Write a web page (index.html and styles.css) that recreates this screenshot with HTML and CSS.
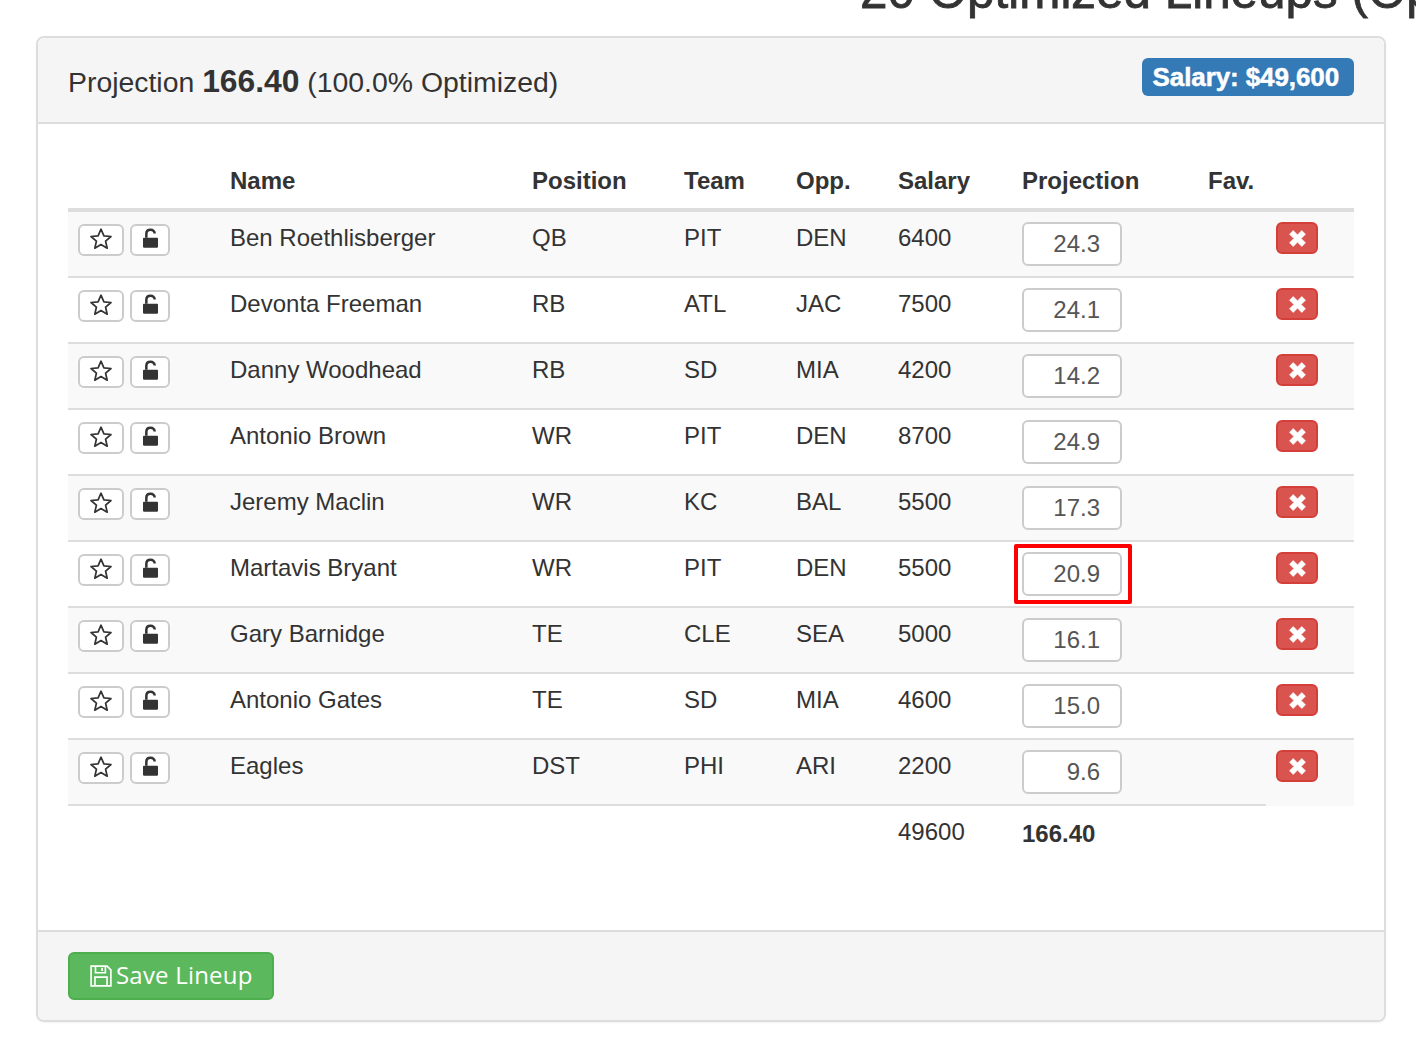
FILE: index.html
```html
<!DOCTYPE html>
<html lang="en">
<head>
<meta charset="utf-8">
<title>Optimized Lineups</title>
<link rel="stylesheet" href="styles.css">
</head>
<body>
<svg class="defs" width="0" height="0" aria-hidden="true">
  <symbol id="star" viewBox="0 0 24 24"><path d="M12 2.200l2.900 6.600 7.100.7-5.400 4.700 1.600 7-6.200-3.700-6.200 3.700 1.600-7L2 9.500l7.100-.7z" fill="none" stroke="currentColor" stroke-width="1.700" stroke-linejoin="round"/></symbol>
  <symbol id="lock" viewBox="0 0 18 24"><path d="M1 11h16a1 1 0 0 1 1 1v10a1 1 0 0 1-1 1H1a1 1 0 0 1-1-1V12a1 1 0 0 1 1-1z" fill="currentColor"/><path d="M4 11V6.500C4 3.500 6 1.500 9 1.500s5 2 5 4.500" fill="none" stroke="currentColor" stroke-width="3"/></symbol>
  <symbol id="cross" viewBox="0 0 16 16"><path d="M2.500 5L5 2.500 8 5.500l3-3L13.500 5l-3 3 3 3-2.500 2.500-3-3-3 3L2.500 11l3-3z" fill="currentColor" stroke="currentColor" stroke-width=".5" stroke-linejoin="round"/></symbol>
  <symbol id="disk" viewBox="0 0 20 20"><path d="M1 1h14.500L19 4.500V19H1z M5 1v6h9V1 M11 2.500v3 M4.500 19v-8h11v8" fill="none" stroke="currentColor" stroke-width="1.500"/></symbol>
</svg>
<h2 class="title">20 Optimized Lineups (Optimal)</h2>
<section class="panel">
  <header class="panel-head">
    <h3 class="panel-title">Projection <b>166.40</b> (100.0% Optimized)</h3>
    <span class="salary">Salary: $49,600</span>
  </header>
  <div class="panel-body">
    <table class="lineup">
      <colgroup>
        <col class="c-act"><col class="c-name"><col class="c-pos"><col class="c-team"><col class="c-opp"><col class="c-sal"><col class="c-proj"><col class="c-fav"><col class="c-del">
      </colgroup>
      <thead>
        <tr><th></th><th>Name</th><th>Position</th><th>Team</th><th>Opp.</th><th>Salary</th><th>Projection</th><th>Fav.</th><th></th></tr>
      </thead>
      <tbody>
        <tr>
          <td><span class="acts"><button class="btn star"><svg class="i-star"><use href="#star"/></svg></button><button class="btn lock"><svg class="i-lock"><use href="#lock"/></svg></button></span></td>
          <td>Ben Roethlisberger</td><td>QB</td><td>PIT</td><td>DEN</td><td>6400</td>
          <td><input class="proj" value="24.3"></td><td></td>
          <td><button class="del"><svg class="i-cross"><use href="#cross"/></svg></button></td>
        </tr>
        <tr>
          <td><span class="acts"><button class="btn star"><svg class="i-star"><use href="#star"/></svg></button><button class="btn lock"><svg class="i-lock"><use href="#lock"/></svg></button></span></td>
          <td>Devonta Freeman</td><td>RB</td><td>ATL</td><td>JAC</td><td>7500</td>
          <td><input class="proj" value="24.1"></td><td></td>
          <td><button class="del"><svg class="i-cross"><use href="#cross"/></svg></button></td>
        </tr>
        <tr>
          <td><span class="acts"><button class="btn star"><svg class="i-star"><use href="#star"/></svg></button><button class="btn lock"><svg class="i-lock"><use href="#lock"/></svg></button></span></td>
          <td>Danny Woodhead</td><td>RB</td><td>SD</td><td>MIA</td><td>4200</td>
          <td><input class="proj" value="14.2"></td><td></td>
          <td><button class="del"><svg class="i-cross"><use href="#cross"/></svg></button></td>
        </tr>
        <tr>
          <td><span class="acts"><button class="btn star"><svg class="i-star"><use href="#star"/></svg></button><button class="btn lock"><svg class="i-lock"><use href="#lock"/></svg></button></span></td>
          <td>Antonio Brown</td><td>WR</td><td>PIT</td><td>DEN</td><td>8700</td>
          <td><input class="proj" value="24.9"></td><td></td>
          <td><button class="del"><svg class="i-cross"><use href="#cross"/></svg></button></td>
        </tr>
        <tr>
          <td><span class="acts"><button class="btn star"><svg class="i-star"><use href="#star"/></svg></button><button class="btn lock"><svg class="i-lock"><use href="#lock"/></svg></button></span></td>
          <td>Jeremy Maclin</td><td>WR</td><td>KC</td><td>BAL</td><td>5500</td>
          <td><input class="proj" value="17.3"></td><td></td>
          <td><button class="del"><svg class="i-cross"><use href="#cross"/></svg></button></td>
        </tr>
        <tr>
          <td><span class="acts"><button class="btn star"><svg class="i-star"><use href="#star"/></svg></button><button class="btn lock"><svg class="i-lock"><use href="#lock"/></svg></button></span></td>
          <td>Martavis Bryant</td><td>WR</td><td>PIT</td><td>DEN</td><td>5500</td>
          <td class="marked"><input class="proj" value="20.9"><span class="highlight"></span></td><td></td>
          <td><button class="del"><svg class="i-cross"><use href="#cross"/></svg></button></td>
        </tr>
        <tr>
          <td><span class="acts"><button class="btn star"><svg class="i-star"><use href="#star"/></svg></button><button class="btn lock"><svg class="i-lock"><use href="#lock"/></svg></button></span></td>
          <td>Gary Barnidge</td><td>TE</td><td>CLE</td><td>SEA</td><td>5000</td>
          <td><input class="proj" value="16.1"></td><td></td>
          <td><button class="del"><svg class="i-cross"><use href="#cross"/></svg></button></td>
        </tr>
        <tr>
          <td><span class="acts"><button class="btn star"><svg class="i-star"><use href="#star"/></svg></button><button class="btn lock"><svg class="i-lock"><use href="#lock"/></svg></button></span></td>
          <td>Antonio Gates</td><td>TE</td><td>SD</td><td>MIA</td><td>4600</td>
          <td><input class="proj" value="15.0"></td><td></td>
          <td><button class="del"><svg class="i-cross"><use href="#cross"/></svg></button></td>
        </tr>
        <tr class="last">
          <td><span class="acts"><button class="btn star"><svg class="i-star"><use href="#star"/></svg></button><button class="btn lock"><svg class="i-lock"><use href="#lock"/></svg></button></span></td>
          <td>Eagles</td><td>DST</td><td>PHI</td><td>ARI</td><td>2200</td>
          <td><input class="proj" value="9.6"></td><td></td>
          <td><button class="del"><svg class="i-cross"><use href="#cross"/></svg></button></td>
        </tr>
      </tbody>
      <tfoot>
        <tr><td colspan="5"></td><td>49600</td><td class="total">166.40</td><td colspan="2"></td></tr>
      </tfoot>
    </table>
  </div>
  <footer class="panel-foot">
    <button class="save"><svg class="i-disk"><use href="#disk"/></svg><span class="save-label">Save Lineup</span></button>
  </footer>
</section>
</body>
</html>
```
FILE: styles.css
```css
html, body {
  margin: 0;
  height: 1040px;
  overflow: hidden;
  background: #fff;
}
body {
  font-family: "Liberation Sans", Arial, sans-serif;
  font-size: 24px;
  line-height: 36px;
  color: #333;
}
.defs { position: absolute; }
.title {
  margin: -31px 0 0;
  padding-left: 860px;
  height: 67px;
  font-size: 49.4px;
  line-height: 44px;
  font-weight: 400;
  -webkit-text-stroke: 0.8px #333;
  white-space: nowrap;
  overflow: hidden;
}
.panel {
  margin: 0 30px 0 36px;
  width: 1350px;
  height: 986px;
  box-sizing: border-box;
  border: 2px solid #ddd;
  border-radius: 8px;
  display: flex;
  flex-direction: column;
  overflow: hidden;
  box-shadow: 0 1px 2px rgba(0,0,0,.05);
}
.panel-head {
  height: 84px;
  flex: none;
  background: #f5f5f5;
  border-bottom: 2px solid #ddd;
  padding: 0 30px;
  display: flex;
  justify-content: space-between;
  align-items: flex-start;
}
.panel-title {
  margin: 23px 0 0;
  font-size: 28.4px;
  line-height: 40px;
  font-weight: 400;
}
.panel-title b { font-size: 31.8px; }
.salary {
  margin-top: 20px;
  background: #337ab7;
  color: #fff;
  font-weight: 700;
  font-size: 26px;
  line-height: 38px;
  border-radius: 6px;
  padding: 0 15px 0 11px;
  letter-spacing: -0.1px;
  -webkit-text-stroke: 0.5px #fff;
}
.panel-body {
  flex: 1;
  padding: 31px 30px 0;
}
.lineup {
  border-collapse: separate;
  border-spacing: 0;
  table-layout: fixed;
  width: 1286px;
}
.c-act { width: 152px; }
.c-name { width: 302px; }
.c-pos { width: 152px; }
.c-team { width: 112px; }
.c-opp { width: 102px; }
.c-sal { width: 124px; }
.c-proj { width: 186px; }
.c-fav { width: 68px; }
.c-del { width: 88px; }
.lineup th {
  height: 53px;
  box-sizing: border-box;
  padding: 8px 10px 9px;
  text-align: left;
  font-weight: 700;
  vertical-align: middle;
  border-bottom: 4px solid #ddd;
}
.lineup tbody td {
  height: 66px;
  box-sizing: border-box;
  padding: 8px 10px 0;
  vertical-align: top;
  border-bottom: 2px solid #ddd;
}
.lineup tbody tr:nth-child(odd) td { background: #f9f9f9; }
.lineup tbody tr.last td:last-child { border-bottom: 0; }
.lineup tfoot td {
  height: 56px;
  padding: 8px 10px 0;
  vertical-align: top;
}
.lineup tfoot .total { font-weight: 700; padding-top: 10px; }
.acts {
  display: flex;
  gap: 6px;
  margin-top: 4px;
}
.btn {
  height: 32px;
  box-sizing: border-box;
  border: 2px solid #ccc;
  border-radius: 6px;
  background: #fff;
  color: #333;
  padding: 0;
  display: flex;
  align-items: center;
  justify-content: center;
}
.star { width: 46px; }
.lock { width: 40px; }
.i-star { width: 24px; height: 24px; margin-top: -2px; }
.i-lock { width: 15px; height: 21px; margin-top: -3px; }
.proj {
  display: block;
  width: 100px;
  height: 44px;
  margin-top: 2px;
  box-sizing: border-box;
  border: 2px solid #ccc;
  border-radius: 6px;
  background: #fff;
  color: #555;
  font: 24px/36px "Liberation Sans", Arial, sans-serif;
  text-align: right;
  padding: 0 20px 0 0;
}
.marked { position: relative; }
.highlight {
  position: absolute;
  left: 2px;
  top: 2px;
  width: 118px;
  height: 60px;
  box-sizing: border-box;
  border: 4px solid #f00;
  border-radius: 2px;
}
.del {
  display: flex;
  align-items: center;
  justify-content: center;
  width: 42px;
  height: 32px;
  margin-top: 2px;
  box-sizing: border-box;
  padding: 0;
  border: 2px solid #d43f3a;
  border-radius: 6px;
  background: #d9534f;
  color: #fff;
}
.i-cross { width: 23px; height: 23px; }
.panel-foot {
  flex: none;
  height: 68px;
  background: #f5f5f5;
  border-top: 2px solid #ddd;
  padding: 20px 0 0 30px;
}
.save {
  display: flex;
  align-items: center;
  gap: 4px;
  width: 206px;
  height: 48px;
  box-sizing: border-box;
  padding: 0 0 0 20px;
  border: 2px solid #4cae4c;
  border-radius: 6px;
  background: #5cb85c;
  color: #fff;
  font-family: "Open Sans", sans-serif;
  font-size: 24px;
  line-height: 32px;
  letter-spacing: 0.2px;
}
.save-label { margin-top: -2px; }
.i-disk { width: 22px; height: 22px; flex: none; }
```
